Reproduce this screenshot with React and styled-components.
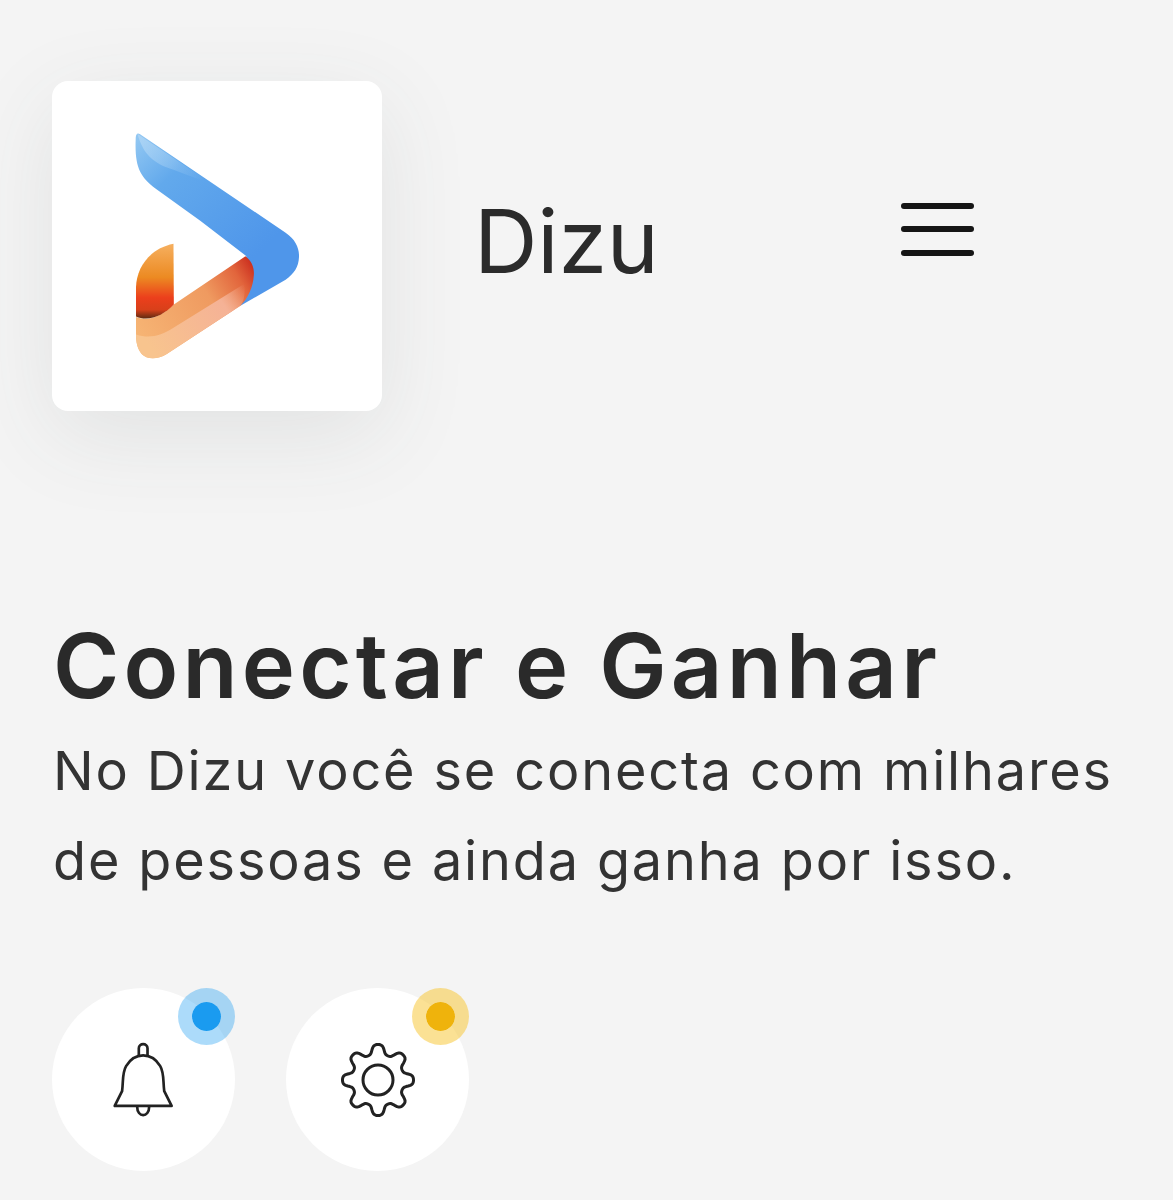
import React from "react";
import styled, { createGlobalStyle } from "styled-components";

const Global = createGlobalStyle`
  html, body { margin: 0; background: #f4f4f4; }
  body { font-family: Inter, "Noto Sans", sans-serif; color: #2a2a2a; overflow: hidden; }
`;

const Page = styled.main`
  width: 1173px;
  height: 1200px;
  box-sizing: border-box;
  padding: 81px 52px 0;
  background: #f4f4f4;
  overflow: hidden;
`;

const Header = styled.header`
  display: flex;
  align-items: center;
`;

const LogoCard = styled.div`
  width: 330px;
  height: 330px;
  flex: none;
  border-radius: 16px;
  background: #fff;
  display: flex;
  align-items: center;
  justify-content: center;
  box-shadow: 0 24px 90px rgba(70, 80, 80, 0.1);
`;

const Brand = styled.h2`
  margin: -10px 0 0 92px;
  font-size: 88px;
  line-height: 100px;
  font-weight: 400;
  letter-spacing: -0.2px;
  color: #2b2b2b;
`;

const Burger = styled.button`
  margin: -34px 0 0 242px;
  width: 73px;
  height: 53px;
  padding: 0;
  border: 0;
  background: transparent;
  display: flex;
  flex-direction: column;
  justify-content: space-between;
`;

const BurgerLine = styled.span`
  display: block;
  height: 6px;
  border-radius: 3px;
  background: #151515;
`;

const Title = styled.h1`
  margin: 205px 0 0 1px;
  font-size: 90px;
  line-height: 100px;
  font-weight: 600;
  letter-spacing: 4.2px;
  color: #2a2a2a;
  white-space: nowrap;
`;

const Lead = styled.p`
  margin: 10px 0 0 1px;
  font-size: 54px;
  line-height: 90px;
  font-weight: 400;
  letter-spacing: 1.85px;
  color: #333;
  white-space: nowrap;
`;

const Actions = styled.div`
  display: flex;
  gap: 51px;
  margin-top: 82px;
`;

const Round = styled.div`
  position: relative;
  width: 183px;
  height: 183px;
  border-radius: 50%;
  background: #fff;
  display: flex;
  align-items: center;
  justify-content: center;
`;

const Badge = styled.span`
  position: absolute;
  top: 0;
  right: 0;
  width: 29px;
  height: 29px;
  border-radius: 50%;
  background: ${(p) => p.$color};
  border: 14.5px solid ${(p) => p.$ring};
  background-clip: padding-box;
`;

const LineIcon = styled.svg`
  display: block;
  fill: none;
  stroke: #222;
  stroke-linejoin: round;
  stroke-linecap: round;
`;

const Logo = () => (
  <svg width="164" height="226" viewBox="285 190 490 675" aria-label="Dizu">
    <defs>
      <linearGradient id="blue" x1="300" y1="200" x2="640" y2="560" gradientUnits="userSpaceOnUse">
        <stop offset="0" stopColor="#90c6f2" />
        <stop offset="0.3" stopColor="#62a9ec" />
        <stop offset="1" stopColor="#4f96ea" />
      </linearGradient>
      <linearGradient id="shine" x1="300" y1="210" x2="480" y2="340" gradientUnits="userSpaceOnUse">
        <stop offset="0" stopColor="#b4d8f6" stopOpacity="0.7" />
        <stop offset="1" stopColor="#b4d8f6" stopOpacity="0" />
      </linearGradient>
      <linearGradient id="band" x1="300" y1="800" x2="640" y2="590" gradientUnits="userSpaceOnUse">
        <stop offset="0" stopColor="#f6b474" />
        <stop offset="0.6" stopColor="#ef9a60" />
        <stop offset="0.86" stopColor="#e2653c" />
        <stop offset="1" stopColor="#cc3120" />
      </linearGradient>
      <linearGradient id="bandLow" x1="350" y1="860" x2="630" y2="670" gradientUnits="userSpaceOnUse">
        <stop offset="0" stopColor="#f8c48e" />
        <stop offset="0.75" stopColor="#f5b296" />
        <stop offset="1" stopColor="#f5b296" stopOpacity="0" />
      </linearGradient>
      <linearGradient id="wing" x1="340" y1="520" x2="340" y2="745" gradientUnits="userSpaceOnUse">
        <stop offset="0" stopColor="#f6b060" />
        <stop offset="0.45" stopColor="#ec8a22" />
        <stop offset="0.72" stopColor="#ec3f1c" />
        <stop offset="0.88" stopColor="#d8401a" />
        <stop offset="1" stopColor="#5a2a10" />
      </linearGradient>
    </defs>
    <path
      fill="url(#blue)"
      d="M292 192 C 296 190 300 194 310 200 L 735 488 C 765 508 776 535 775 560 C 774 590 760 610 735 628 L 600 706 L 560 640 L 618 558 L 480 452 L 345 355 C 300 320 284 290 287 210 C 287 200 288 194 292 192 Z"
    />
    <path
      fill="url(#shine)"
      d="M292 192 L 520 345 L 400 300 C 340 280 310 255 292 192 Z"
    />
    <path
      fill="url(#band)"
      d="M615 558 C 634 572 642 592 640 615 C 638 650 622 685 600 706 L 380 850 C 350 868 320 866 305 850 C 292 835 288 815 288 790 L 288 740 C 330 755 370 732 401 702 Z"
    />
    <path
      fill="url(#bandLow)"
      d="M288 792 C 330 806 362 795 400 772 L 612 640 C 615 670 610 695 600 706 L 380 850 C 350 868 320 866 305 850 C 292 835 288 815 288 792 Z"
    />
    <path
      fill="url(#wing)"
      d="M400 521 L 401 702 C 370 735 325 755 288 738 L 288 650 C 290 590 330 535 400 521 Z"
    />
  </svg>
);

const Bell = () => (
  <LineIcon width="67" height="77" viewBox="210 200 200 230" strokeWidth="8">
    <path d="M224 394 H394 L372 350 C 368 320 372 295 360 275 C 348 255 330 243 309 243 C 288 243 270 255 258 275 C 246 295 250 320 246 350 Z" />
    <path d="M296 243 V222 C 296 205 322 205 322 222 V243" />
    <path d="M291 396 C 291 430 327 430 327 396" />
  </LineIcon>
);

const gearPath = (() => {
  const pts = [];
  const cx = 40, cy = 40, teeth = 8, steps = 192;
  for (let i = 0; i < steps; i++) {
    const a = (i / steps) * Math.PI * 2;
    const w = Math.cos(a * teeth);
    const r = 30.8 + 5.2 * Math.tanh(w * 1.5);
    pts.push(`${(cx + r * Math.sin(a)).toFixed(2)} ${(cy - r * Math.cos(a)).toFixed(2)}`);
  }
  return `M${pts.join(" L")} Z`;
})();

const Gear = () => (
  <LineIcon width="80" height="80" viewBox="0 0 80 80" strokeWidth="3">
    <path d={gearPath} />
    <circle cx="40" cy="40" r="15" />
  </LineIcon>
);

export default function App() {
  return (
    <Page>
      <Global />
      <Header>
        <LogoCard>
          <Logo />
        </LogoCard>
        <Brand>Dizu</Brand>
        <Burger aria-label="Menu">
          <BurgerLine />
          <BurgerLine />
          <BurgerLine />
        </Burger>
      </Header>
      <Title>Conectar e Ganhar</Title>
      <Lead>
        No Dizu você se conecta com milhares
        <br />
        de pessoas e ainda ganha por isso.
      </Lead>
      <Actions>
        <Round>
          <Bell />
          <Badge $color="#1a9bf0" $ring="rgba(26,155,240,0.36)" />
        </Round>
        <Round>
          <Gear />
          <Badge $color="#efb30c" $ring="rgba(247,200,60,0.55)" />
        </Round>
      </Actions>
    </Page>
  );
}
